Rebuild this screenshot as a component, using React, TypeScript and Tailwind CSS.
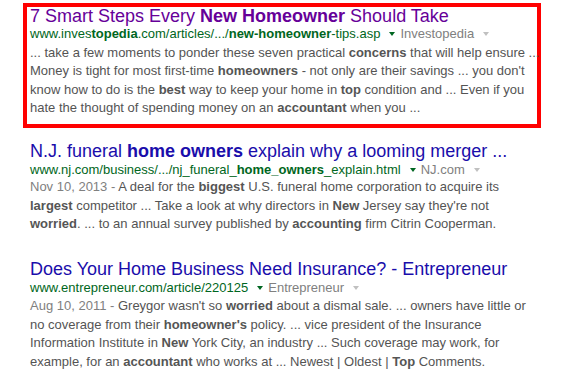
import React from 'react';

function Caret({ color, right }: { color: string; right?: boolean }) {
  return (
    <span
      className={`inline-block align-middle ml-[9px] -mt-[2px] w-0 h-0 border-l-[3px] border-r-[3px] border-t-[4px] border-l-transparent border-r-transparent ${
        right ? 'mr-0' : 'mr-[5px]'
      }`}
      style={{ borderTopColor: color }}
    />
  );
}

function Url({ children, source }: { children: React.ReactNode; source: string }) {
  return (
    <div className="text-[13px] leading-[17px] text-[#006621] whitespace-nowrap">
      {children}
      <Caret color="#006621" />
      <span className="text-[#808080]">{source}</span>
      <Caret color="#c0c0c0" right />
    </div>
  );
}

const B = ({ children }: { children: React.ReactNode }) => (
  <b className="font-bold text-[#555]">{children}</b>
);

export default function App() {
  return (
    <div
      className="w-[577px] h-[376px] bg-white pt-[3px] pl-[23px] overflow-hidden"
      style={{ fontFamily: '"Liberation Sans", Arial, sans-serif' }}
    >
      {/* Result 1 (highlighted) */}
      <div className="w-[518px] h-[125px] border-4 border-[#ff0000] pl-[3px]">
        <h3 className="text-[18px] leading-[18px] text-[#660099]">
          7 Smart Steps Every <b className="font-bold">New Homeowner</b> Should Take
        </h3>
        <Url source="Investopedia">
          www.inves<b>topedia</b>.com/articles/.../<b>new-homeowner</b>-tips.asp
        </Url>
        <p className="mt-[1.5px] text-[13px] leading-[18.5px] text-[#545454] whitespace-nowrap">
          ... take a few moments to ponder these seven practical <B>concerns</B> that will help ensure ...
          <br />
          Money is tight for most first-time <B>homeowners</B> - not only are their savings ... you don't
          <br />
          know how to do is the <B>best</B> way to keep your home in <B>top</B> condition and ... Even if you
          <br />
          hate the thought of spending money on an <B>accountant</B> when you ...
        </p>
      </div>

      {/* Result 2 */}
      <div className="pl-[7px] mt-[13px]">
        <h3 className="text-[18px] leading-[20px] text-[#1a0dab]">
          N.J. funeral <b>home owners</b> explain why a looming merger ...
        </h3>
        <Url source="NJ.com">
          www.nj.com/business/.../nj_funeral_<b>home_owners</b>_explain.html
        </Url>
        <p className="text-[13px] leading-[18.5px] text-[#545454] whitespace-nowrap">
          <span className="text-[#808080]">Nov 10, 2013 - </span>A deal for the <B>biggest</B> U.S. funeral home corporation to acquire its
          <br />
          <B>largest</B> competitor ... Take a look at why directors in <B>New</B> Jersey say they're not
          <br />
          <B>worried</B>. ... to an annual survey published by <B>accounting</B> firm Citrin Cooperman.
        </p>
      </div>

      {/* Result 3 */}
      <div className="pl-[7px] mt-[25.5px]">
        <h3 className="text-[18px] leading-[20px] text-[#1a0dab]">
          Does Your Home Business Need Insurance? - Entrepreneur
        </h3>
        <Url source="Entrepreneur">www.entrepreneur.com/article/220125</Url>
        <p className="mt-[1px] text-[13px] leading-[18.5px] text-[#545454] whitespace-nowrap">
          <span className="text-[#808080]">Aug 10, 2011 - </span>Greygor wasn't so <B>worried</B> about a dismal sale. ... owners have little or
          <br />
          no coverage from their <B>homeowner's</B> policy. ... vice president of the Insurance
          <br />
          Information Institute in <B>New</B> York City, an industry ... Such coverage may work, for
          <br />
          example, for an <B>accountant</B> who works at ... Newest | Oldest | <B>Top</B> Comments.
        </p>
      </div>
    </div>
  );
}
